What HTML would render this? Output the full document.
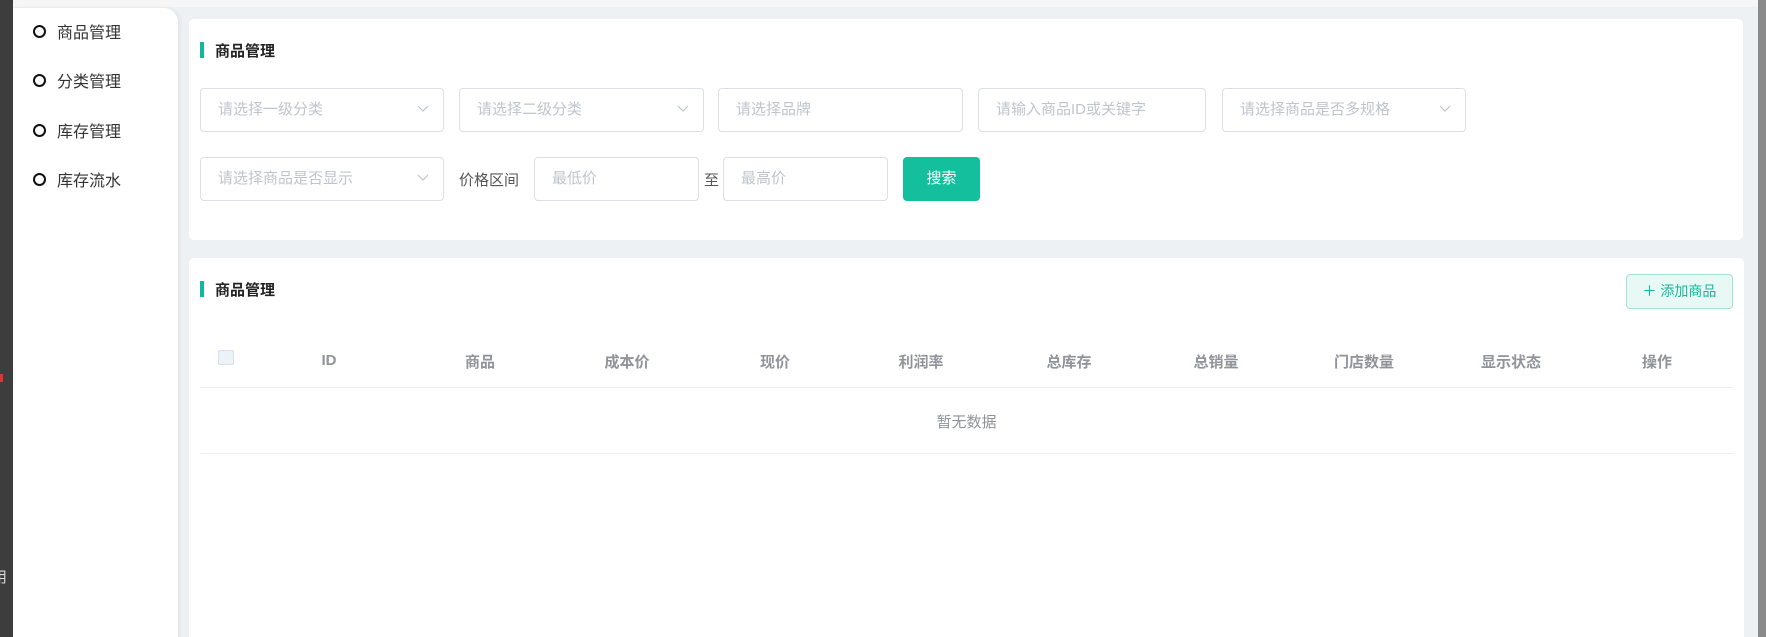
<!DOCTYPE html>
<html><head><meta charset="utf-8"><style>
*{box-sizing:border-box;margin:0;padding:0}
html,body{width:1766px;height:637px;overflow:hidden}
body{background:#eef1f4;font-family:"Liberation Sans","Noto Sans CJK SC",sans-serif;position:relative}
.abs{position:absolute}
.dark{left:0;top:0;width:13px;height:637px;background:#3d3d3d}
.top{left:13px;top:0;width:1745px;height:7px;background:#f6f6f6}
.side{left:13px;top:8px;width:165px;height:640px;background:#fff;border-top-right-radius:14px;box-shadow:2px 0 4px rgba(0,0,0,.06)}
.item{left:33px;font-size:16px;color:#333;display:flex;align-items:center;height:20px}
.item i{width:13px;height:13px;border:2px solid #111;border-radius:50%;margin-right:11px}
.card{background:#fff;border-radius:5px}
.bar{width:4px;height:16px;background:#13b89a}
.ttl{font-size:15px;font-weight:bold;color:#222}
.in{border:1px solid #dcdfe6;border-radius:4px;height:44px;font-size:15px;color:#c0c4cc;padding-left:17px;line-height:42px}
.in svg{position:absolute;right:14px;top:16px}
.th{top:351px;font-size:15px;font-weight:bold;color:#909399;transform:translateX(-50%)}
.sb{left:1758px;top:0;width:8px;height:637px;background:#8a8a8a}
</style></head><body>
<div class="abs dark"></div>
<div class="abs" style="left:0;top:374px;width:3px;height:8px;background:#d33"></div>
<div class="abs" style="left:0;top:566px;font-size:15px;color:#ddd;width:13px;overflow:hidden;text-indent:-8px">用</div>
<div class="abs top"></div>
<div class="abs side"></div>
<div class="abs item" style="top:21px"><i></i>商品管理</div>
<div class="abs item" style="top:70px"><i></i>分类管理</div>
<div class="abs item" style="top:120px"><i></i>库存管理</div>
<div class="abs item" style="top:169px"><i></i>库存流水</div>

<div class="abs card" style="left:189px;top:19px;width:1554px;height:221px"></div>
<div class="abs bar" style="left:200px;top:42px"></div>
<div class="abs ttl" style="left:215px;top:40px">商品管理</div>
<div class="abs in" style="left:200px;top:88px;width:244px">请选择一级分类<svg width="12" height="8"><path d="M1 1l5 5 5-5" fill="none" stroke="#c0c4cc" stroke-width="1.2"/></svg></div>
<div class="abs in" style="left:459px;top:88px;width:245px">请选择二级分类<svg width="12" height="8"><path d="M1 1l5 5 5-5" fill="none" stroke="#c0c4cc" stroke-width="1.2"/></svg></div>
<div class="abs in" style="left:718px;top:88px;width:245px">请选择品牌</div>
<div class="abs in" style="left:978px;top:88px;width:228px">请输入商品ID或关键字</div>
<div class="abs in" style="left:1222px;top:88px;width:244px">请选择商品是否多规格<svg width="12" height="8"><path d="M1 1l5 5 5-5" fill="none" stroke="#c0c4cc" stroke-width="1.2"/></svg></div>
<div class="abs in" style="left:200px;top:157px;width:244px">请选择商品是否显示<svg width="12" height="8"><path d="M1 1l5 5 5-5" fill="none" stroke="#c0c4cc" stroke-width="1.2"/></svg></div>
<div class="abs" style="left:459px;top:169px;font-size:15px;color:#555">价格区间</div>
<div class="abs in" style="left:534px;top:157px;width:165px">最低价</div>
<div class="abs" style="left:704px;top:169px;font-size:15px;color:#555">至</div>
<div class="abs in" style="left:723px;top:157px;width:165px">最高价</div>
<div class="abs" style="left:903px;top:157px;width:77px;height:44px;background:#13bf9c;border-radius:4px;color:#fff;font-size:15px;text-align:center;line-height:44px">搜索</div>

<div class="abs card" style="left:189px;top:258px;width:1555px;height:400px"></div>
<div class="abs bar" style="left:200px;top:281px"></div>
<div class="abs ttl" style="left:215px;top:279px">商品管理</div>
<div class="abs" style="left:1626px;top:274px;width:107px;height:35px;background:#e8f8f4;border:1px solid #9fe6d5;border-radius:4px;color:#13b89a;font-size:14px;line-height:33px;text-align:center">＋ 添加商品</div>
<div class="abs" style="left:218px;top:350px;width:16px;height:15px;border:1px solid #dcdfe6;border-radius:2px;background:#edf1f8"></div>
<div class="abs th" style="left:329px;top:352px">ID</div>
<div class="abs th" style="left:480px">商品</div>
<div class="abs th" style="left:627px">成本价</div>
<div class="abs th" style="left:775px">现价</div>
<div class="abs th" style="left:921px">利润率</div>
<div class="abs th" style="left:1069px">总库存</div>
<div class="abs th" style="left:1216px">总销量</div>
<div class="abs th" style="left:1364px">门店数量</div>
<div class="abs th" style="left:1511px">显示状态</div>
<div class="abs th" style="left:1657px">操作</div>
<div class="abs" style="left:200px;top:387px;width:1533px;height:1px;background:#ebeef5"></div>
<div class="abs" style="left:200px;top:411px;width:1533px;text-align:center;font-size:15px;color:#909399">暂无数据</div>
<div class="abs" style="left:200px;top:453px;width:1533px;height:1px;background:#ebeef5"></div>
<div class="abs sb"></div>
</body></html>
